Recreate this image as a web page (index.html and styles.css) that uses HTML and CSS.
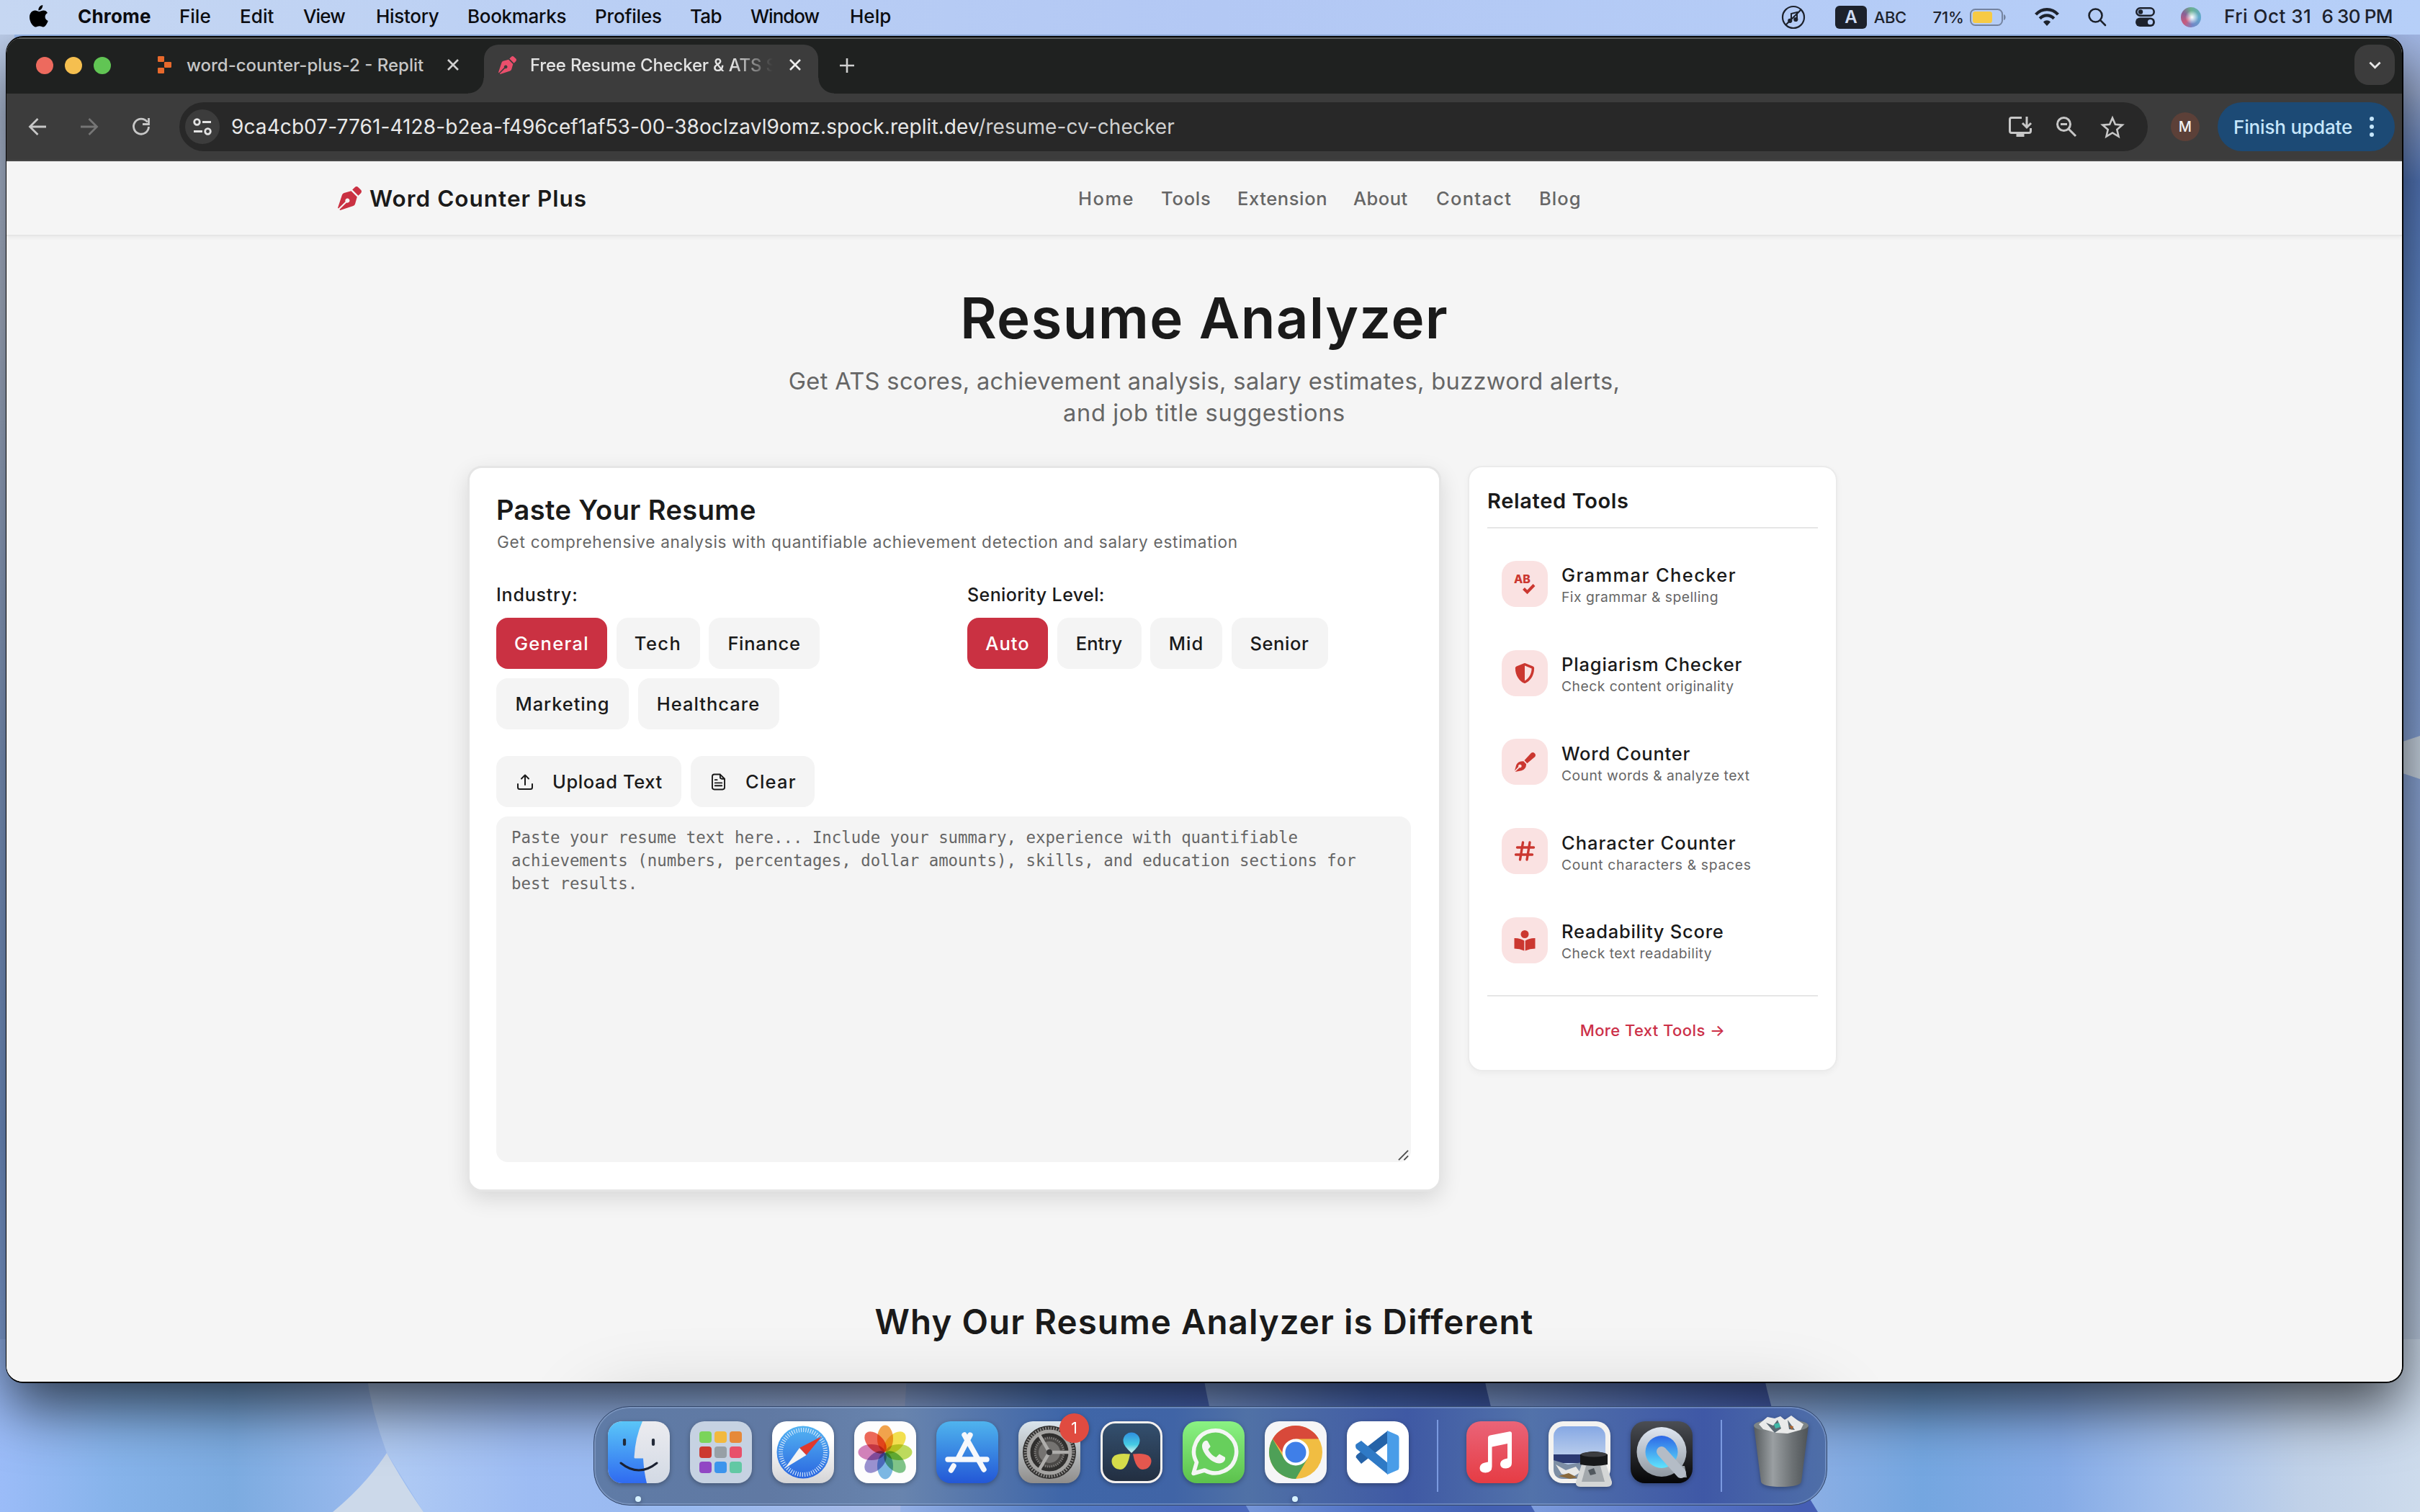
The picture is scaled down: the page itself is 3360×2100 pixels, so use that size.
FILE: index.html
```html
<!DOCTYPE html>
<html lang="en">
<head>
<meta charset="utf-8">
<title>Free Resume Checker &amp; ATS Score</title>
<link rel="stylesheet" href="styles.css">
</head>
<body>
<svg class="wallpaper" viewBox="0 0 3360 2100" preserveAspectRatio="none" aria-hidden="true">
  <defs>
    <linearGradient id="wl" x1="0" x2="540" y1="0" y2="0" gradientUnits="userSpaceOnUse"><stop offset="0" stop-color="#9bbcf8"/><stop offset=".3" stop-color="#86b3ea"/><stop offset=".6" stop-color="#7cabe0"/><stop offset="1" stop-color="#9ebcf0"/></linearGradient>
    <linearGradient id="wm" x1="510" x2="1260" y1="0" y2="0" gradientUnits="userSpaceOnUse"><stop offset="0" stop-color="#b3cdf4"/><stop offset=".3" stop-color="#9dbcf3"/><stop offset=".6" stop-color="#98b9ef"/><stop offset="1" stop-color="#a6b8e4"/></linearGradient>
    <linearGradient id="w1" x1="1250" x2="1670" y1="0" y2="0" gradientUnits="userSpaceOnUse"><stop offset="0" stop-color="#94b0e6"/><stop offset=".5" stop-color="#547ec6"/><stop offset="1" stop-color="#4a68bc"/></linearGradient>
    <linearGradient id="w2" x1="1670" x2="2060" y1="0" y2="0" gradientUnits="userSpaceOnUse"><stop offset="0" stop-color="#84a4e0"/><stop offset=".6" stop-color="#4e70c4"/><stop offset="1" stop-color="#4360b2"/></linearGradient>
    <linearGradient id="w3" x1="2060" x2="2500" y1="0" y2="0" gradientUnits="userSpaceOnUse"><stop offset="0" stop-color="#8aa9e4"/><stop offset=".6" stop-color="#5877c8"/><stop offset="1" stop-color="#455eb4"/></linearGradient>
    <linearGradient id="w4" x1="2450" x2="3360" y1="0" y2="0" gradientUnits="userSpaceOnUse"><stop offset="0" stop-color="#94b2e6"/><stop offset=".24" stop-color="#74a6e0"/><stop offset=".45" stop-color="#85abe6"/><stop offset=".62" stop-color="#a2bfec"/><stop offset=".82" stop-color="#c0d1e8"/><stop offset="1" stop-color="#cddbec"/></linearGradient>
    <linearGradient id="wr" x1="0" x2="0" y1="0" y2="2100" gradientUnits="userSpaceOnUse"><stop offset="0" stop-color="#a8c0f4"/><stop offset=".06" stop-color="#9aabd0"/><stop offset=".12" stop-color="#5478bc"/><stop offset=".25" stop-color="#6a93d4"/><stop offset=".5" stop-color="#8aa6da"/><stop offset=".75" stop-color="#a6b8d4"/><stop offset="1" stop-color="#cddbec"/></linearGradient>
    <linearGradient id="we" x1="0" x2="0" y1="0" y2="2100" gradientUnits="userSpaceOnUse"><stop offset="0" stop-color="#c0d2f0"/><stop offset=".2" stop-color="#bac6dc"/><stop offset=".5" stop-color="#8ea9d6"/><stop offset=".75" stop-color="#7fa2dc"/><stop offset="1" stop-color="#9bbcf8"/></linearGradient>
  </defs>
  <rect width="20" height="1860" fill="url(#we)"/>
  <rect x="3320" width="40" height="1860" fill="url(#wr)"/>
  <path d="M3330 1032 3360 1022V1082L3330 1072Z" fill="#ccd8e6"/>
  <rect y="1860" width="560" height="240" fill="url(#wl)"/>
  <path d="M504 1860Q508 1940 537 2018L588 2100H1260V1860Z" fill="url(#wm)"/>
  <path d="M537 2018Q508 2062 462 2100H588Q560 2060 537 2018Z" fill="#ccd9ea"/>
  <path d="M1262 1860Q1254 1980 1250 2100H1740V1860Z" fill="url(#w1)"/>
  <path d="M1664 1860Q1680 2010 1735 2100H2150V1860Z" fill="url(#w2)"/>
  <path d="M2052 1860Q2070 2000 2131 2100H2540V1860Z" fill="url(#w3)"/>
  <path d="M2440 1860Q2460 2000 2524 2100H3360V1860Z" fill="url(#w4)"/>
</svg>

<header class="menubar">
  <svg class="apple" viewBox="0 0 26 31"><path d="M18.2 0c.3 2.2-.6 4.100-1.700 5.400-1.100 1.300-2.600 2.100-4.100 2-.3-2 .6-4 1.700-5.200C15.200 1 16.900.1 18.200 0zM25 10.900c-2.200 1.300-3.400 3.100-3.400 5.400 0 2.700 1.600 4.800 4.100 5.800-1.300 3.900-3.900 8.400-6.700 8.400-1.900 0-2.700-1.200-5.200-1.200-2.500 0-3.400 1.200-5.300 1.200C5 30.500 0 23.500 0 17 0 11.200 3.600 7.600 7.700 7.600c2.300 0 4.200 1.500 5.700 1.500 1.400 0 3.600-1.600 6.200-1.600 2.200 0 4.200 1.200 5.400 3.400z"/></svg>
  <nav class="menus">
    <span class="m-app">Chrome</span><span class="m-file">File</span><span class="m-edit">Edit</span><span class="m-view">View</span><span class="m-hist">History</span><span class="m-book">Bookmarks</span><span class="m-prof">Profiles</span><span class="m-tab">Tab</span><span class="m-win">Window</span><span class="m-help">Help</span>
  </nav>
  <div class="status">
    <svg class="s-shazam" viewBox="0 0 34 34" fill="none" stroke="#1d222c" stroke-width="2.200"><circle cx="17" cy="17" r="15"/><path d="M6.500 27.500 27.500 6.500"/><path d="M14 21.500V12l8-2v9.500" stroke-width="2"/><circle cx="12.300" cy="21.800" r="2" fill="#1d222c"/><circle cx="20.300" cy="20" r="2" fill="#1d222c"/></svg>
    <span class="s-key">A</span><span class="s-abc">ABC</span><span class="s-pct">71%</span>
    <svg class="s-batt" viewBox="0 0 50 24"><rect x="1" y="1" width="44" height="22" rx="6.500" fill="none" stroke="#74839f" stroke-width="2"/><rect x="4" y="4" width="27" height="16" rx="3.500" fill="#f6ca45"/><path d="M47 8c3.500 1 3.500 7 0 8z" fill="#74839f"/></svg>
    <svg class="s-wifi" viewBox="0 0 34 25" fill="none" stroke="#1d222c" stroke-width="4.200"><path d="M1.600 9.200C10-.3 24-.3 32.400 9.200"/><path d="M7.200 14.800c5.600-5.800 14-5.800 19.600 0"/><path d="M12 19.500c3-3 7-3 10 0L17 25z" fill="#1d222c" stroke="none"/></svg>
    <svg class="s-find" viewBox="0 0 26 26" fill="none" stroke="#1d222c" stroke-width="2.600" stroke-linecap="round"><circle cx="10.500" cy="10.500" r="9"/><path d="M17.200 17.200 24 24"/></svg>
    <svg class="s-ctl" viewBox="0 0 27 27"><rect x="1.300" y="1.300" width="24.400" height="10.400" rx="5.200" fill="none" stroke="#1d222c" stroke-width="2.600"/><circle cx="7" cy="6.500" r="3.200" fill="#1d222c"/><rect y="14.500" width="27" height="12.500" rx="6.200" fill="#1d222c"/><circle cx="20.500" cy="20.700" r="3.600" fill="#b6cdf7"/></svg>
    <span class="s-siri"></span>
    <span class="s-date">Fri Oct 31</span><span class="s-time">6 30 PM</span>
  </div>
</header>

<section class="window">
  <div class="tabstrip">
    <i class="light red"></i><i class="light yellow"></i><i class="light green"></i>
    <div class="tab idle">
      <svg class="replit" viewBox="0 0 20 24" fill="#e8692c"><rect width="9" height="8" rx="1.200"/><rect x="9" y="8" width="10" height="8" rx="1.200"/><rect y="16" width="9" height="8" rx="1.200"/></svg>
      <span class="tab-title">word-counter-plus-2 - Replit</span>
      <svg class="x" viewBox="0 0 16 16"><path d="M1 1l14 14M15 1 1 15"/></svg>
    </div>
    <div class="tab active">
      <svg class="nib pink" viewBox="0 0 512 512"><use href="#pen-nib"/></svg>
      <span class="tab-title fade">Free Resume Checker &amp; ATS S</span>
      <svg class="x" viewBox="0 0 16 16"><path d="M1 1l14 14M15 1 1 15"/></svg>
    </div>
    <svg class="plus" viewBox="0 0 20 20"><path d="M10 0v20M0 10h20"/></svg>
    <span class="tabsearch"><svg viewBox="0 0 18 11"><path d="M1.500 1.500 9 9l7.500-7.500"/></svg></span>
  </div>
  <div class="toolbar">
    <svg class="ic back" viewBox="0 0 24 24"><path d="M24 12H2M12.500 1 1.500 12l11 11"/></svg>
    <svg class="ic fwd" viewBox="0 0 24 24"><path d="M0 12h22M11.500 1l11 11-11 11"/></svg>
    <svg class="ic reload" viewBox="0 0 24 24"><path d="M20.500 5.500A10.500 10.500 0 1 0 22.500 12"/><path d="M22.500 0v8.500H14"/></svg>
    <div class="omnibox">
      <span class="site"><svg viewBox="0 0 26 24"><circle cx="5.500" cy="5.500" r="3.800"/><path d="M13 5.500h12M1 18.500h12"/><circle cx="20.500" cy="18.500" r="3.800"/></svg></span>
      <span class="url">9ca4cb07-7761-4128-b2ea-f496cef1af53-00-38oclzavl9omz.spock.replit.dev<em>/resume-cv-checker</em></span>
      <svg class="oi install" viewBox="0 0 32 28"><path d="M18 1.500H4Q1.500 1.500 1.500 4v16q0 2.500 2.500 2.500h24q2.500 0 2.500-2.500v-4"/><path d="M25 0v14M19 9l6 6 6-6"/><path d="M10.500 23h11v5h-11z" fill="#c7c7c7" stroke="none"/></svg>
      <svg class="oi zoomout" viewBox="0 0 28 28"><circle cx="10.500" cy="10.500" r="9"/><path d="M17.500 17.500 27 27M6 10.500h9"/></svg>
      <svg class="oi star" viewBox="0 0 32 30"><path d="M16 2.800l3.900 9 9.800.8-7.400 6.400 2.200 9.500L16 23.400l-8.500 5.100 2.200-9.500-7.400-6.400 9.800-.8z"/></svg>
    </div>
    <span class="avatar">M</span>
    <div class="update"><span>Finish update</span><svg viewBox="0 0 6 28"><circle cx="3" cy="3" r="3"/><circle cx="3" cy="14" r="3"/><circle cx="3" cy="25" r="3"/></svg></div>
  </div>

  <div class="page">
    <div class="site-header">
      <div class="brand"><svg class="nib crimson" viewBox="0 0 512 512"><path id="pen-nib" d="M136.600 138.790a64.003 64.003 0 0 0-43.310 41.350L0 460l14.690 14.690L164.800 324.580c-2.990-6.260-4.800-13.180-4.800-20.580 0-26.510 21.490-48 48-48s48 21.490 48 48-21.490 48-48 48c-7.400 0-14.320-1.810-20.580-4.800L37.310 497.310 52 512l279.860-93.290a64.003 64.003 0 0 0 41.350-43.310L416 224 288 96l-151.400 42.790zm361.340-64.620l-60.110-60.110c-18.750-18.750-49.160-18.750-67.910 0l-56.550 56.550 128.020 128.020 56.550-56.550c18.750-18.750 18.750-49.160 0-67.910z"/></svg><span>Word Counter Plus</span></div>
      <nav class="links"><a class="n-home">Home</a><a class="n-tools">Tools</a><a class="n-ext">Extension</a><a class="n-about">About</a><a class="n-contact">Contact</a><a class="n-blog">Blog</a></nav>
    </div>

    <div class="hero">
      <h1>Resume Analyzer</h1>
      <p>Get ATS scores, achievement analysis, salary estimates, buzzword alerts,<br><span class="second">and job title suggestions</span></p>
    </div>

    <div class="columns">
      <div class="card">
        <h2>Paste Your Resume</h2>
        <p class="lead">Get comprehensive analysis with quantifiable achievement detection and salary estimation</p>
        <div class="filters">
          <div>
            <div class="label industry">Industry:</div>
            <div class="chips"><span class="chip on b-general">General</span><span class="chip b-tech">Tech</span><span class="chip b-finance">Finance</span><span class="chip b-marketing">Marketing</span><span class="chip b-health">Healthcare</span></div>
          </div>
          <div>
            <div class="label seniority">Seniority Level:</div>
            <div class="chips"><span class="chip on b-auto">Auto</span><span class="chip b-entry">Entry</span><span class="chip b-mid">Mid</span><span class="chip b-senior">Senior</span></div>
          </div>
        </div>
        <div class="actions">
          <span class="chip b-upload"><svg class="up" viewBox="0 0 22 22"><path d="M1 14v4.500Q1 21 3.500 21h15q2.500 0 2.500-2.500V14M11 15V1.500M6 6.500l5-5 5 5"/></svg>Upload Text</span>
          <span class="chip b-clear"><svg class="doc" viewBox="0 0 20 24"><path d="M12.500 1H4Q1 1 1 4v16q0 3 3 3h12q3 0 3-3V7.500zM12.500 1v4q0 2.500 2.500 2.500h4M5 9h3M5 13.500h10M5 17.500h10"/></svg>Clear</span>
        </div>
        <div class="editor">Paste your resume text here... Include your summary, experience with quantifiable<br>achievements (numbers, percentages, dollar amounts), skills, and education sections for<br>best results.<svg class="grip" viewBox="0 0 16 16"><path d="M1 15 15 1M9 15l6-6"/></svg></div>
      </div>

      <aside class="side">
        <h3>Related Tools</h3>
        <ul>
          <li><span class="badge"><svg viewBox="0 0 32 32"><text x="1" y="14.500" class="ab">AB</text><path d="M14.500 22.500l5 5 9.500-10" fill="none" stroke="#cb3730" stroke-width="4"/></svg></span><div><b class="t1">Grammar Checker</b><small>Fix grammar &amp; spelling</small></div></li>
          <li><span class="badge"><svg class="fa" viewBox="0 0 512 512"><path d="M466.500 83.700l-192-80a48.150 48.150 0 0 0-36.900 0l-192 80C27.700 91.100 16 108.600 16 128c0 198.500 114.500 335.700 221.500 380.300 11.800 4.900 25.100 4.900 36.900 0C360.100 472.600 496 349.300 496 128c0-19.400-11.700-36.900-29.500-44.300zM256.100 446.300l-.1-381 175.900 73.300c-3.300 151.400-82.100 261.100-175.800 307.700z"/></svg></span><div><b class="t2">Plagiarism Checker</b><small>Check content originality</small></div></li>
          <li><span class="badge"><svg viewBox="0 0 32 32"><path d="M15.500 14 25 3.700a3.900 3.900 0 0 1 5.300 5.400L19.300 18.300z"/><path d="M14.300 15.200l3.800 4q-.2 7.300-6.500 9L2.600 30l6-5.800a2.300 2.300 0 1 0-1.400-1.300L2 28.600 4.200 20.500q2.300-5.500 10.100-5.300z"/></svg></span><div><b class="t3">Word Counter</b><small>Count words &amp; analyze text</small></div></li>
          <li><span class="badge"><svg viewBox="0 0 32 32"><path d="M13.500 4 9.500 28M23 4l-4 24M5.500 11h23M3.500 21h23" fill="none" stroke="#cb3730" stroke-width="3.400" stroke-linecap="round"/></svg></span><div><b class="t4">Character Counter</b><small class="s4">Count characters &amp; spaces</small></div></li>
          <li><span class="badge"><svg viewBox="0 0 32 32"><circle cx="16" cy="7.500" r="5.500"/><path d="M15.300 16.500Q9 12.500 1.500 13v14.500Q9 27.500 15.300 30.500zM16.700 16.500Q23 12.500 30.500 13v14.500Q23 27.500 16.700 30.500z"/></svg></span><div><b class="t5">Readability Score</b><small>Check text readability</small></div></li>
        </ul>
        <a class="more">More Text Tools →</a>
      </aside>
    </div>

    <h2 class="why">Why Our Resume Analyzer is Different</h2>
    <div class="dock-glow"></div>
  </div>
</section>

<footer class="dock">
  <div class="app open">
    <svg viewBox="0 0 86 86"><defs><linearGradient id="fb" x2="0" y2="1"><stop stop-color="#5ac6f8"/><stop offset="1" stop-color="#2f6af0"/></linearGradient><linearGradient id="fw" x2="0" y2="1"><stop stop-color="#ececf0"/><stop offset="1" stop-color="#d2d9e4"/></linearGradient><clipPath id="sq"><rect width="86" height="86" rx="20"/></clipPath></defs><g clip-path="url(#sq)"><rect width="86" height="86" fill="url(#fw)"/><path d="M0 0h48Q38 22 36.500 50q0 1.500 1.500 1.500h11Q50 70 54 86H0z" fill="url(#fb)"/></g><path d="M23 26v6M63 26v6" stroke="#222a38" stroke-width="4.200" stroke-linecap="round"/><path d="M18 58q25 20 50 0" fill="none" stroke="#1a2030" stroke-width="3" stroke-linecap="round"/></svg></div>
  <div class="app launch"><i class="c1"></i><i class="c2"></i><i class="c3"></i><i class="c4"></i><i class="c5"></i><i class="c6"></i><i class="c7"></i><i class="c8"></i><i class="c9"></i></div>
  <div class="app"><svg viewBox="0 0 86 86"><defs><linearGradient id="sb" x2="0" y2="1"><stop stop-color="#54b4f2"/><stop offset="1" stop-color="#2a66e0"/></linearGradient><linearGradient id="sw" x2="0" y2="1"><stop offset=".3" stop-color="#fff"/><stop offset="1" stop-color="#d4d4d6"/></linearGradient></defs><rect width="86" height="86" rx="20" fill="url(#sw)"/><circle cx="43" cy="43" r="36.500" fill="url(#sb)"/><circle cx="43" cy="43" r="31" fill="none" stroke="#dcebfb" stroke-width="6" stroke-dasharray="1.100 2.146"/><path d="M69 21 38 37l9.500 10z" fill="#e0392e"/><path d="M18 65 38 37l9.500 10z" fill="#f4f4f4"/></svg></div>
  <div class="app"><svg viewBox="0 0 86 86"><rect width="86" height="86" rx="20" fill="#fdfdfd"/><g class="petals"><ellipse cx="43" cy="24" rx="11" ry="18.500" fill="#f29a38"/><ellipse cx="43" cy="24" rx="11" ry="18.500" transform="rotate(45 43 43)" fill="#f3de3c"/><ellipse cx="43" cy="24" rx="11" ry="18.500" transform="rotate(90 43 43)" fill="#b8d84c"/><ellipse cx="43" cy="24" rx="11" ry="18.500" transform="rotate(135 43 43)" fill="#72bf7c"/><ellipse cx="43" cy="24" rx="11" ry="18.500" transform="rotate(180 43 43)" fill="#6fb2e2"/><ellipse cx="43" cy="24" rx="11" ry="18.500" transform="rotate(225 43 43)" fill="#8f86cc"/><ellipse cx="43" cy="24" rx="11" ry="18.500" transform="rotate(270 43 43)" fill="#cf74b4"/><ellipse cx="43" cy="24" rx="11" ry="18.500" transform="rotate(315 43 43)" fill="#ec5a48"/></g></svg></div>
  <div class="app"><svg viewBox="0 0 86 86"><defs><linearGradient id="as" x2="0" y2="1"><stop stop-color="#4fb4ee"/><stop offset="1" stop-color="#2357d6"/></linearGradient></defs><rect width="86" height="86" rx="20" fill="url(#as)"/><path d="M47 19 29.500 53M39 19l27 48M16 53h54M24 62l-3.500 6" fill="none" stroke="#f6f8fc" stroke-width="7.400" stroke-linecap="round"/></svg></div>
  <div class="app"><svg viewBox="0 0 86 86"><defs><linearGradient id="gs" x2="0" y2="1"><stop stop-color="#dbe6ee"/><stop offset="1" stop-color="#8f8d8b"/></linearGradient></defs><rect width="86" height="86" rx="20" fill="url(#gs)"/><circle cx="43" cy="43" r="37" fill="#302f2e"/><circle cx="43" cy="43" r="33.500" fill="none" stroke="#8d8c8a" stroke-width="4" stroke-dasharray="1.800 1.900"/><circle cx="43" cy="43" r="29" fill="none" stroke="#a5a4a2" stroke-width="5"/><circle cx="43" cy="43" r="20" fill="#4a4846" stroke="#7d7b79" stroke-width="3" stroke-dasharray="1.600 1.400"/><circle cx="43" cy="43" r="15" fill="#757371"/><path d="M43 43h27M43 43 29 19M43 43 29 67" stroke="#aeadab" stroke-width="4.500"/><circle cx="43" cy="43" r="4" fill="#333"/></svg><span class="count">1</span></div>
  <div class="app"><svg viewBox="0 0 86 86"><defs><linearGradient id="dv" x2="0" y2="1"><stop stop-color="#34506f"/><stop offset="1" stop-color="#222e40"/></linearGradient><linearGradient id="d1" x2="0" y2="1"><stop stop-color="#2f8fe0"/><stop offset=".6" stop-color="#46cce4"/><stop offset="1" stop-color="#dff6ee"/></linearGradient></defs><rect x="1.500" y="1.500" width="83" height="83" rx="19" fill="url(#dv)" stroke="#f4f0ee" stroke-width="3"/><path d="M43 44Q31.500 34 31.500 27a11.500 11.500 0 0 1 23 0Q54.500 34 43 44z" fill="url(#d1)"/><path d="M41 45.500Q38 62 31.500 66A11.500 11.500 0 0 1 15.500 55Q16 42.500 41 45.500z" fill="#d5dc4a"/><path d="M45 45.500Q48 62 54.500 66A11.500 11.500 0 0 0 70.500 55Q70 42.500 45 45.500z" fill="#e4574e"/></svg></div>
  <div class="app"><svg viewBox="0 0 86 86"><defs><linearGradient id="wa" x2="0" y2="1"><stop stop-color="#8af283"/><stop offset="1" stop-color="#5cc14c"/></linearGradient></defs><rect width="86" height="86" rx="20" fill="url(#wa)"/><path d="M15 72.500l4.500-15.500A29.500 29.500 0 1 1 30.500 68z" fill="#67cf5c" stroke="#f4f6f4" stroke-width="5.500" stroke-linejoin="round"/><path d="M35 28c-2-3-8 0-8 6.500C27 43 39 58 51 58.500c5 0 9-4 8-8.500l-8-4.500-4.500 4.500C42 48.500 37 43 35.500 39l3.200-4z" fill="#f4f6f4"/></svg></div>
  <div class="app open"><svg viewBox="0 0 86 86"><rect width="86" height="86" rx="20" fill="#f5f5f7"/><circle cx="43" cy="43" r="37" fill="#f1bd42"/><path d="M43 24.500H75A37 37 0 0 0 11 24.500l18 25z" fill="#d8493a"/><path d="M10.960 24.500A37 37 0 0 0 43 80L59 52.500 27 52z" fill="#4ea057"/><circle cx="43" cy="43" r="18.500" fill="#fff"/><circle cx="43" cy="43" r="14.500" fill="#3f7fe8"/></svg></div>
  <div class="app"><svg viewBox="0 0 86 86"><rect width="86" height="86" rx="20" fill="#fff"/><path d="M12.500 50q0-2.500 2-4L57 13v17L20 59z" fill="#2563a8"/><path d="M12.500 32 20 27l37 31v16L13 38q-1.500-3-.5-6z" fill="#2f7ac6"/><path d="M56 13l14 6q2.500 1 2.500 4v41q0 3-2.500 4l-14 6z" fill="#4a9de8"/></svg></div>
  <i class="rule"></i>
  <div class="app"><svg viewBox="0 0 86 86"><defs><linearGradient id="mu" x2="0" y2="1"><stop stop-color="#ea6478"/><stop offset="1" stop-color="#e63c44"/></linearGradient></defs><rect width="86" height="86" rx="20" fill="url(#mu)"/><path d="M30 23q0-3 3-3.600l27-5.200q3-.5 3 2.500V58q0 7-8 7.500-8 0-8-6 0-5 6-7l4-1V31l-21.500 4.500V63q0 8-9 8.500-8-.3-8-6.500 0-6 7-7.500l4.500-1z" fill="#fff"/></svg></div>
  <div class="app"><svg viewBox="0 0 96 96" class="wide"><defs><linearGradient id="sk" x2="0" y2="1"><stop stop-color="#86a8e4"/><stop offset=".55" stop-color="#b8ccec"/></linearGradient></defs><rect width="86" height="86" rx="20" fill="#f3f2f0"/><rect x="7" y="7" width="72" height="73" rx="14" fill="url(#sk)"/><path d="M7 46h72v12H7z" fill="#2c3a72"/><path d="M7 54l20 6 20-3 32 5v10q-4 8-14 8H21Q7 80 7 66z" fill="#7d8ea4"/><path d="M10 60l14 8 14-5 6 8-10 6-16-4z" fill="#e8e8e6"/><path d="M14 76l14-4 12 6-10 2z" fill="#8a6a3c"/><path d="M46 60h34l8 24q1 7-7 7H44q-7 0-6-7z" fill="#d4d6d6"/><path d="M52 62h20l6 22H46z" fill="#a3a8ac"/><path d="M44 46q19-8 38 0v14q-19 4-38 0z" fill="#17181a"/><ellipse cx="63" cy="46" rx="18" ry="3.500" fill="#3c3d40"/><path d="M55 68l8-3 3 8-8 2z" fill="#51585e"/></svg></div>
  <div class="app"><svg viewBox="0 0 86 86"><defs><linearGradient id="qk" x2="0" y2="1"><stop stop-color="#4b4e54"/><stop offset="1" stop-color="#050506"/></linearGradient><linearGradient id="qr" x2="0" y2="1"><stop stop-color="#dfe7f2"/><stop offset="1" stop-color="#8f979f"/></linearGradient><linearGradient id="qb" x2="0" y2="1"><stop stop-color="#2c66e6"/><stop offset="1" stop-color="#5fe4fb"/></linearGradient></defs><rect width="86" height="86" rx="20" fill="url(#qk)"/><circle cx="43" cy="42.500" r="34.500" fill="url(#qr)"/><path d="M60 62h15l3 16H66z" fill="#9aa1a8"/><circle cx="43" cy="42.500" r="22.500" fill="url(#qb)"/><path d="M43 42 70 72" stroke="#b4bcc6" stroke-width="14" stroke-linecap="round"/></svg></div>
  <i class="rule"></i>
  <div class="app"><svg viewBox="0 0 86 100" class="tall"><defs><linearGradient id="tr"><stop stop-color="#565b5e"/><stop offset=".35" stop-color="#9a9fa2"/><stop offset=".7" stop-color="#6d7275"/><stop offset="1" stop-color="#4d5255"/></linearGradient></defs><path d="M5 14q38 16 76 0L71 92q-2 7-28 7T15 92z" fill="url(#tr)"/><ellipse cx="43" cy="14" rx="38" ry="9" fill="#7d8486"/><path d="M12 12l12-10 10 2 8-3 6 5 9-6 8 6 9 6-4 8-18 5-16-1-18-5z" fill="#e9eaea"/><path d="M22 10l10 4 6-8 5 12-9 6zM52 6l10 14-8-1zM64 8l6 10" fill="#5a6872"/><path d="M33 12l7-2 2 6-7 2z" fill="#3fb8a8"/><path d="M54 14l6 1-2 5z" fill="#b0662e"/></svg></div>
</footer>
</body>
</html>
```
FILE: styles.css
```css
* { box-sizing: border-box; margin: 0; padding: 0; }
body { width: 3360px; height: 2100px; overflow: hidden; position: relative; background: #9bbcf0; font-family: Inter, "Liberation Sans", sans-serif; color: #1a1a1a; display: flex; flex-direction: column; white-space: nowrap; }
svg { display: block; flex: none; overflow: visible; }
i, em, b, small { font-style: normal; }
ul { list-style: none; }
.wallpaper { position: absolute; left: 0; top: 0; width: 3360px; height: 2100px; z-index: -1; }

/* menu bar */
.menubar { height: 48px; flex: none; position: relative; z-index: 3; display: flex; align-items: flex-start; padding: 0 38px 0 19px; background: linear-gradient(90deg, #c6d7f2 0, #bacff4 25%, #b3c8f4 50%, #b6cff8 100%); font-size: 26px; line-height: 45px; font-weight: 500; color: #0b0c10; }
.apple { width: 26px; height: 31px; margin: 7px 41px 0 22px; }
.menus { display: flex; flex: 1; letter-spacing: -.3px; }
.m-app { width: 141px; font-weight: 700; letter-spacing: .19px; }
.m-file { width: 84px; letter-spacing: 0; }
.m-edit { width: 88px; letter-spacing: .1px; }
.m-view { width: 101px; letter-spacing: -.9px; }
.m-hist { width: 127px; }
.m-book { width: 177px; }
.m-prof { width: 132px; letter-spacing: -.18px; }
.m-tab { width: 84px; letter-spacing: -.7px; }
.m-win { width: 138px; letter-spacing: -1px; }
.m-help { letter-spacing: 0; }
.status { display: flex; color: #1d222c; width: 849px; }
.s-shazam { width: 34px; height: 34px; margin: 7px 41px 0 0; }
.s-key { width: 44px; height: 32px; margin: 8px 10px 0 0; border-radius: 6px; background: #1c212b; color: #cfdcf4; font-size: 24px; font-weight: 600; line-height: 32px; text-align: center; }
.s-abc { width: 82px; font-size: 22px; line-height: 48px; letter-spacing: -.4px; }
.s-pct { width: 52px; font-size: 22px; line-height: 48px; }
.s-batt { width: 50px; height: 24px; margin: 12px 40px 0 0; }
.s-wifi { width: 34px; height: 25px; margin: 11px 40px 0 0; }
.s-find { width: 26px; height: 26px; margin: 11px 40px 0 0; }
.s-ctl { width: 27px; height: 27px; margin: 10px 36px 0 0; }
.s-siri { width: 28px; height: 28px; margin: 10px 32px 0 0; border-radius: 50%; background: radial-gradient(circle at 55% 50%, #fff 0, rgba(255,255,255,.1) 45%), conic-gradient(#5aa884, #4e9fc8 90deg, #6378c0 170deg, #c2486e 230deg, #7a4f8a 300deg, #5aa884); }
.s-date { width: 136px; letter-spacing: .5px; }
.s-time { letter-spacing: -.6px; word-spacing: -.5px; }

/* browser window */
.window { width: 3329px; height: 1871px; margin: 2px 0 0 8px; flex: none; border: 2px solid #050505; border-left-width: 1px; border-radius: 24px; background: #f5f5f5; box-shadow: 0 34px 80px rgba(0,0,0,.66); overflow: hidden; }
.tabstrip { height: 78px; padding: 10px 10px 0 41px; background: #1f2120; box-shadow: inset 0 2px #5c5f5e; display: flex; }
.light { width: 24px; height: 24px; margin: 17px 16px 0 0; border-radius: 50%; flex: none; }
.red { background: #ed6a5e; } .yellow { background: #f5bf4f; } .green { background: #61c554; }
.tab { height: 68px; flex: none; display: flex; align-items: center; padding-bottom: 12px; font-size: 24px; font-weight: 500; }
.tab.idle { width: 502px; padding-left: 49px; color: #c6c6c6; }
.replit { width: 20px; height: 24px; }
.tab-title { width: 382px; flex: none; padding-left: 20px; }
.x { width: 16px; height: 16px; stroke: #d0d0d0; stroke-width: 2.6; fill: none; }
.active .x { stroke: #eee; }
.tab.active { width: 464px; padding-left: 20px; background: #3c3c3c; color: #e3e3e3; border-radius: 20px 20px 0 0; position: relative; }
.tab.active::before, .tab.active::after { content: ""; position: absolute; bottom: 0; width: 22px; height: 22px; }
.tab.active::before { left: -22px; background: radial-gradient(circle at 0 0, transparent 21px, #3c3c3c 22px); }
.tab.active::after { right: -22px; background: radial-gradient(circle at 100% 0, transparent 21px, #3c3c3c 22px); }
.pink { width: 25px; height: 25px; fill: #ea4f6c; }
.tab .fade { width: 358px; margin-right: 21px; padding-left: 19px; letter-spacing: -.2px; -webkit-mask: linear-gradient(90deg, #000 300px, transparent 356px); mask: linear-gradient(90deg, #000 300px, transparent 356px); }
.plus { width: 20px; height: 20px; margin: 19px 0 0 30px; stroke: #d0d0d0; stroke-width: 2.6; }
.tabsearch { width: 56px; height: 56px; margin-left: auto; border-radius: 20px; background: #3c3c3c; display: flex; align-items: center; justify-content: center; }
.tabsearch svg { width: 17px; height: 11px; fill: none; stroke: #e6e6e6; stroke-width: 3; }
.toolbar { height: 94px; border-bottom: 2px solid #474747; background: #3c3c3c; display: flex; align-items: center; padding: 0 10px 0 31px; }
.ic { width: 24px; height: 24px; fill: none; stroke: #c7c7c7; stroke-width: 2.8; }
.fwd { margin-left: 48px; stroke: #757575; }
.reload { margin-left: 48px; }
.omnibox { width: 2733px; height: 68px; flex: none; margin-left: 41px; border-radius: 34px; background: #282828; display: flex; align-items: center; padding: 0 33px 0 8px; }
.site { width: 48px; height: 48px; border-radius: 50%; background: #3c3c3c; display: flex; align-items: center; justify-content: center; }
.site svg { width: 26px; height: 24px; fill: none; stroke: #e3e3e3; stroke-width: 2.8; }
.url { flex: 1; margin-left: 16px; font-size: 28px; letter-spacing: .09px; color: #e8e8e8; }
.url em { color: #d0d0d0; }
.oi { fill: none; stroke: #c7c7c7; stroke-width: 3; height: 28px; }
.install { width: 32px; } .zoomout { width: 28px; margin-left: 34px; } .star { width: 32px; height: 30px; margin-left: 34px; stroke-width: 2.6; }
.avatar { width: 40px; height: 40px; flex: none; margin-left: 32px; border-radius: 50%; background: #5c4038; color: #f2f2f2; font-size: 20px; line-height: 40px; font-weight: 500; text-align: center; }
.update { width: 246px; height: 68px; flex: none; margin-left: auto; border-radius: 34px; background: #1c4a75; color: #c6e6fb; font-size: 26px; font-weight: 500; letter-spacing: -.15px; display: flex; align-items: center; padding-left: 22px; }
.update svg { width: 6px; height: 28px; margin-left: 24px; fill: #c6e6fb; }

/* page */
.page { height: 1697px; position: relative; background: #f5f5f5; overflow: hidden; }
.site-header { height: 104px; border-bottom: 2px solid #e6e6e6; box-shadow: 0 2px 6px rgba(0,0,0,.05); display: grid; grid-template-columns: 1028px auto; align-items: center; padding: 0 0 0 460px; }
.brand { display: flex; align-items: center; font-size: 31.5px; font-weight: 600; letter-spacing: 1px; }
.brand span { margin-left: 11px; }
.crimson { width: 33px; height: 33px; fill: #ca3142; }
.links { display: flex; font-size: 25.5px; font-weight: 500; color: #666; }
.n-home { width: 115px; letter-spacing: 1.5px; } .n-tools { width: 106px; letter-spacing: .8px; } .n-ext { width: 161px; letter-spacing: .6px; } .n-about { width: 115px; letter-spacing: .5px; } .n-contact { width: 143px; letter-spacing: 1.3px; } .n-blog { letter-spacing: 1.1px; }
.hero { padding-top: 66px; width: 3326px; text-align: center; }
.hero h1 { font-size: 78px; line-height: 96px; font-weight: 600; letter-spacing: 1.3px; }
.hero p { margin-top: 17px; font-size: 32.6px; line-height: 44px; color: #666; letter-spacing: .35px; }
.hero .second { letter-spacing: .65px; }
.columns { display: flex; align-items: flex-start; padding-left: 640px; margin-top: 52px; }
.card { width: 1352px; height: 1008px; padding: 34px 39px 0 37px; background: #fff; border: 3px solid #e5e5e5; border-radius: 20px; box-shadow: 0 10px 30px rgba(0,0,0,.12); }
.card h2 { font-size: 38px; line-height: 48px; font-weight: 600; letter-spacing: .4px; }
.lead { margin-top: 5px; padding-left: 1px; font-size: 22.6px; line-height: 32px; color: #666; letter-spacing: .72px; }
.filters { display: grid; grid-template-columns: 616px 616px; gap: 38px; margin-top: 39px; }
.label { font-size: 25px; line-height: 36px; font-weight: 500; margin-bottom: 14px; }
.industry { letter-spacing: .8px; } .seniority { letter-spacing: .4px; }
.chips, .actions { display: flex; flex-wrap: wrap; gap: 13px 12.5px; }
.chip { height: 71px; border-radius: 16px; background: #f4f4f4; font-size: 25.5px; font-weight: 500; letter-spacing: 1px; display: flex; align-items: center; justify-content: center; }
.chip.on { background: #ca3142; color: #fff; }
.b-general { width: 154px; letter-spacing: 1.3px; } .b-tech { width: 116px; letter-spacing: 1.4px; } .b-finance { width: 154px; letter-spacing: .7px; } .b-marketing { width: 184px; letter-spacing: .9px; } .b-health { width: 196px; }
.b-auto { width: 112px; } .b-entry { width: 117px; letter-spacing: 0; } .b-mid { width: 100px; } .b-senior { width: 134px; letter-spacing: .6px; }
.actions { margin-top: 37px; gap: 13px; }
.b-upload, .b-clear { justify-content: flex-start; padding-left: 29px; letter-spacing: .6px; }
.b-upload { width: 257px; } .b-clear { width: 172px; letter-spacing: 1.2px; }
.up, .doc { fill: none; stroke: #1a1a1a; stroke-width: 2; stroke-linecap: round; stroke-linejoin: round; }
.up { width: 22px; height: 22px; margin-right: 27px; }
.doc { width: 19px; height: 24px; margin-right: 28px; }
.editor { position: relative; height: 480px; margin-top: 13px; padding: 13px 21px; border-radius: 16px; background: #f4f4f4; color: #666; font: 22.4px/32px "DejaVu Sans Mono", monospace; }
.grip { position: absolute; right: 3px; bottom: 2px; width: 15px; height: 15px; fill: none; stroke: #4c4c4c; stroke-width: 2; }

.side { width: 513px; height: 841px; margin-left: 37px; padding: 27px 25px 0; background: #fff; border: 2px solid #ebebeb; border-radius: 20px; box-shadow: 0 3px 8px rgba(0,0,0,.04); }
.side h3 { height: 58px; border-bottom: 2px solid #e6e6e6; font-size: 29px; line-height: 40px; font-weight: 600; letter-spacing: .65px; }
.side ul { padding: 15px 0 0; }
.side li { height: 123.75px; padding-left: 20px; display: flex; align-items: center; }
.badge { width: 64px; height: 64px; margin-right: 19px; border-radius: 20px; background: #fae2e2; display: flex; align-items: center; justify-content: center; }
.badge svg { width: 32px; height: 32px; fill: #cb3730; }
.badge .fa { width: 28px; height: 28px; }
.ab { font-size: 16px; font-weight: 800; }
.side li div { padding-top: 7px; display: flex; flex-direction: column; }
.side b { font-size: 25.5px; line-height: 31px; font-weight: 500; }
.t1 { letter-spacing: 1.4px; } .t2 { letter-spacing: .85px; } .t3 { letter-spacing: .8px; } .t4 { letter-spacing: 1px; } .t5 { letter-spacing: .75px; }
.side small { font-size: 19.3px; line-height: 31px; color: #666; letter-spacing: .48px; }
.side .s4 { letter-spacing: .7px; }
.more { display: block; margin-top: 14px; padding-top: 29px; border-top: 2px solid #e6e6e6; font-size: 22px; line-height: 36px; font-weight: 500; letter-spacing: .4px; color: #cc3048; text-align: center; }
.why { margin-top: 151px; width: 3326px; text-align: center; font-size: 47.5px; line-height: 60px; font-weight: 600; letter-spacing: 1.05px; }
.dock-glow { position: absolute; left: 815px; bottom: -172px; width: 1712px; height: 138px; border-radius: 48px; box-shadow: 0 0 110px rgba(0,0,0,.22); }

/* dock */
.dock { position: relative; z-index: 2; width: 1713px; height: 138px; margin: 32px auto 0 824px; flex: none; padding: 20px 19px 0; border-radius: 50px; background: linear-gradient(90deg, #5f7ba6 0, #6079a3 14%, #6884ae 25%, #3f66a8 38%, #4064a6 47%, #5071a6 53%, #3f59a4 66%, #5272aa 76%, #3f58a6 90%, #4f6fa8 100%); border: 1px solid #33476a; box-shadow: inset 0 0 0 2px rgba(160,185,225,.4); display: flex; gap: 28px; }
.app { position: relative; width: 86px; height: 86px; flex: none; filter: drop-shadow(0 2px 3px rgba(0,0,0,.3)); }
.app svg { width: 86px; height: 86px; }
.app .wide { width: 96px; height: 96px; }
.app .tall { height: 100px; margin-top: -8px; }
.app.open::after { content: ""; position: absolute; left: 38px; bottom: -26px; width: 8px; height: 8px; border-radius: 50%; background: #d8f2ff; }
.petals ellipse { mix-blend-mode: multiply; opacity: .9; }
.launch { border-radius: 20px; background: #c6d2e2; display: grid; grid-template-columns: repeat(3, 17px); grid-auto-rows: 16px; gap: 5px 4px; padding: 14px 13px; }
.launch i { border-radius: 4px; }
.c1 { background: #7bd45a; } .c2 { background: #f2b93e; } .c3 { background: #e6893a; } .c4 { background: #cc3a30; } .c5 { background: #97a0a6; } .c6 { background: #e8506a; } .c7 { background: #9147c4; } .c8 { background: #3c94ec; } .c9 { background: #62c8a4; }
.rule { width: 2px; height: 100px; margin: -2px 11px 0 11px; background: #7b9ae0; }
.count { position: absolute; left: 57px; top: -11px; width: 41px; height: 41px; border-radius: 50%; background: #e04b40; color: #fff; font-size: 22px; line-height: 41px; text-align: center; }
```
